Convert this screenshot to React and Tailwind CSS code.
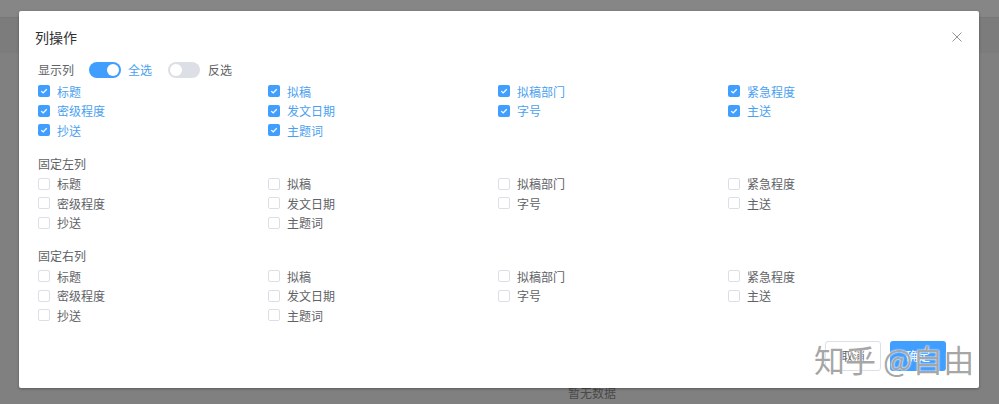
import React from 'react';

const COLUMNS = ['标题', '拟稿', '拟稿部门', '紧急程度', '密级程度', '发文日期', '字号', '主送', '抄送', '主题词'];

const FONT = { fontFamily: '"Microsoft YaHei", "Noto Sans CJK SC", "Noto Sans", sans-serif' };

const CheckIcon = () => (
  <svg width="8" height="8" viewBox="0 0 8 8" fill="none">
    <path d="M1.3 4.1 L3.2 5.9 L6.7 2.2" stroke="white" strokeWidth="1.3" />
  </svg>
);

const CheckItem = ({ label, checked }) => (
  <div className="flex items-center h-[19.5px]">
    {checked ? (
      <span className="w-[12px] h-[12px] rounded-[2px] bg-[#409eff] flex items-center justify-center">
        <CheckIcon />
      </span>
    ) : (
      <span className="w-[12px] h-[12px] rounded-[2px] border border-[#dcdfe6] bg-white" />
    )}
    <span className={`ml-[7px] text-[12px] leading-[19px] ${checked ? 'text-[#4a9ff0]' : 'text-[#606266]'}`}>{label}</span>
  </div>
);

const CheckGrid = ({ checked }) => (
  <div className="grid grid-cols-[repeat(4,230px)]">
    {COLUMNS.map(c => <CheckItem key={c} label={c} checked={checked} />)}
  </div>
);

const Toggle = ({ on }) => (
  <span className={`w-[32px] h-[16px] rounded-full flex items-center px-[2px] ${on ? 'bg-[#409eff] justify-end' : 'bg-[#dcdfe6] justify-start'}`}>
    <span className="w-[12px] h-[12px] rounded-full bg-white" />
  </span>
);

const Section = ({ title }) => (
  <div className="mt-[13.5px]">
    <div className="h-[20px] leading-[20px] text-[12px] text-[#606266]">{title}</div>
    <div className="mt-[0.5px]">
      <CheckGrid checked={false} />
    </div>
  </div>
);

export default function App() {
  return (
    <div className="relative w-[999px] h-[404px] overflow-hidden bg-[#808080]" style={FONT}>
      {/* page behind the overlay */}
      <div className="h-[17px] bg-[#868686]" />
      <div className="h-[1px] bg-[#777777]" />
      <div className="h-[35px] bg-[#7c7c7c]" />
      <div className="h-[333px]" />
      <div className="flex justify-center pl-[185px] text-[12px] leading-[14px] text-[#4a4a4a]">暂无数据</div>

      {/* dialog */}
      <div className="absolute left-[19px] top-[11px] w-[960px] h-[377px] bg-white rounded-[2px] shadow-[0_1px_3px_rgba(0,0,0,0.3)]">
        <div className="flex items-center justify-between pt-[16px] pl-[16px] pr-[17px]">
          <span className="text-[14px] leading-[20px] text-[#303133]">列操作</span>
          <svg width="10" height="10" viewBox="0 0 10 10" className="mt-[-1px]">
            <path d="M0.5 0.5 L9.5 9.5 M9.5 0.5 L0.5 9.5" stroke="#909399" strokeWidth="1" />
          </svg>
        </div>

        <div className="px-[19px] pt-[13px]">
          <div className="flex items-center h-[20px] text-[12px] text-[#606266] whitespace-nowrap">
            <span className="w-[36px] shrink-0">显示列</span>
            <span className="ml-[15px]"><Toggle on /></span>
            <span className="ml-[7px] text-[#4a9ff0]">全选</span>
            <span className="ml-[16px]"><Toggle on={false} /></span>
            <span className="ml-[8px]">反选</span>
          </div>
          <div className="mt-[1.5px]">
            <CheckGrid checked />
          </div>

          <Section title="固定左列" />
          <Section title="固定右列" />
        </div>

        <div className="flex justify-end gap-[9px] pr-[33px] mt-[16px]">
          <button className="w-[56px] h-[30px] rounded-[3px] border border-[#dcdfe6] bg-white text-[12px] text-[#606266]">取消</button>
          <button className="w-[56px] h-[30px] rounded-[3px] bg-[#409eff] text-[12px] text-white">确定</button>
        </div>
      </div>

      {/* watermark */}
      <div
        className="absolute left-[814px] top-[339px] text-[31px] leading-[40px] text-[rgba(150,150,150,0.85)] pointer-events-none whitespace-nowrap"
        style={{ textShadow: '0 0 2px #fff, 0 0 1px #fff' }}
      >
        知乎 @自由
      </div>
    </div>
  );
}
